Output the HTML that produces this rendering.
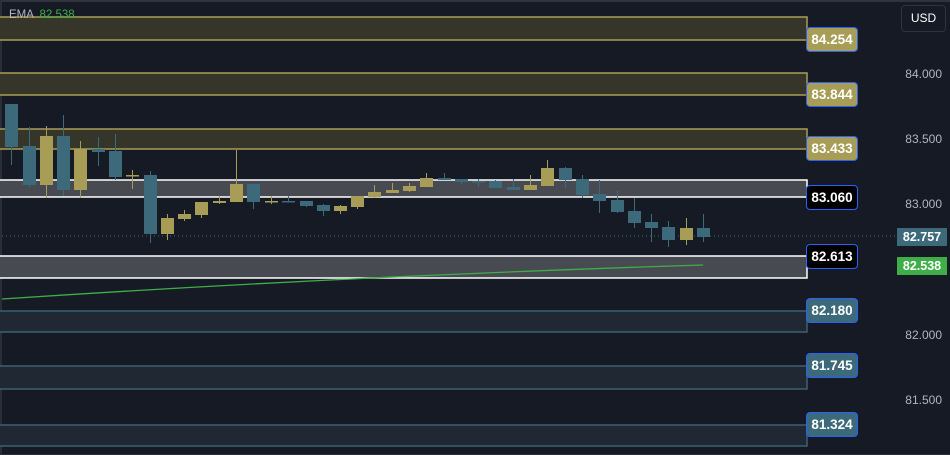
<!DOCTYPE html>
<html><head><style>
html,body{margin:0;padding:0;background:#161a25;}
body{width:950px;height:454px;overflow:hidden;position:relative;font-family:"Liberation Sans",sans-serif;}
.frame{position:absolute;left:0;top:0;width:948px;height:452px;border:1px solid #2a2e39;border-top:2px solid #2f333e;border-left:2px solid #2a2e39;}
.lbl{position:absolute;left:806px;width:50px;height:23px;border:1.5px solid #2962ff;border-radius:4px;color:#fff;font-size:13.5px;font-weight:bold;text-align:center;line-height:23px;}
.ax{position:absolute;right:8px;color:#b2b5be;font-size:12px;}
.tag{position:absolute;left:897px;width:50px;height:18px;color:#fff;font-weight:bold;font-size:12.5px;text-align:center;line-height:18px;}
</style></head><body>
<div class="frame"></div>
<svg width="950" height="454" style="position:absolute;left:0;top:0">
<g stroke-width="1.5">
<rect x="-3" y="17" width="810" height="23" fill="#363529" stroke="#a89d57"/>
<rect x="-3" y="73" width="810" height="22" fill="#363529" stroke="#a89d57"/>
<rect x="-3" y="129" width="810" height="20" fill="#363529" stroke="#a89d57"/>
<rect x="-3" y="180" width="810" height="17" fill="#484a52" stroke="#ffffff"/>
<rect x="-3" y="256" width="810" height="22" fill="#484a52" stroke="#ffffff"/>
<rect x="-3" y="311" width="810" height="21" fill="#1f2833" stroke="#3d6170"/>
<rect x="-3" y="366" width="810" height="23" fill="#1f2833" stroke="#3d6170"/>
<rect x="-3" y="425" width="810" height="21" fill="#1f2833" stroke="#3d6170"/>
</g>
<line x1="2" y1="236" x2="897" y2="236" stroke="#3d6a7a" stroke-width="1" stroke-dasharray="1,3"/>
<path d="M2 299 Q350 276 703 265" fill="none" stroke="#3fae49" stroke-width="1.3"/>
<g id="c"></g>
</svg>
<div style="position:absolute;left:9px;top:9px;font-size:11.5px;color:#b2b5be">EMA <span style="color:#3fae49;margin-left:3px">82.538</span></div>
<div style="position:absolute;left:901px;top:5px;width:43px;height:25px;border:1px solid #2f333e;border-radius:4px;color:#fff;font-size:12px;text-align:center;line-height:25px">USD</div>
<div class="lbl" style="top:27px;background:#a89d57">84.254</div>
<div class="lbl" style="top:82px;background:#a89d57">83.844</div>
<div class="lbl" style="top:136px;background:#a89d57">83.433</div>
<div class="lbl" style="top:185px;background:#000">83.060</div>
<div class="lbl" style="top:244px;background:#000">82.613</div>
<div class="lbl" style="top:298px;background:#3d6a7a">82.180</div>
<div class="lbl" style="top:353px;background:#3d6a7a">81.745</div>
<div class="lbl" style="top:412px;background:#3d6a7a">81.324</div>
<div class="ax" style="top:67px">84.000</div>
<div class="ax" style="top:132px">83.500</div>
<div class="ax" style="top:197px">83.000</div>
<div class="ax" style="top:328px">82.000</div>
<div class="ax" style="top:393px">81.500</div>
<div class="tag" style="top:228px;background:#3d6a7a">82.757</div>
<div class="tag" style="top:257px;background:#3fae49">82.538</div>
<script>
var d=[[5,'b',104,147,104,165],[23,'b',146,185,127,187],[40,'y',136,185,126,198],[57,'b',136,190,115,196],[74,'y',149,190,141,198],[92,'b',149,152,137,166],[109,'b',151,177,134,180],[126,'y',175,176,170,189],[144,'b',175,234,171,243],[161,'y',218,234,214,240],[178,'y',214,219,210,221],[195,'y',202,215,202,218],[213,'y',201,203,196,204],[230,'y',184,202,150,202],[247,'b',184,202,184,209],[265,'y',201,202,196,204],[282,'b',201,202,196,202],[300,'b',201,206,201,207],[317,'b',205,211,204,216],[334,'y',206,211,205,214],[351,'y',196,207,196,209],[368,'y',192,197,185,198],[386,'y',190,193,183,193],[403,'y',186,191,183,192],[420,'y',178,187,173,187],[438,'b',178,180,173,180],[455,'b',179,182,179,184],[472,'b',181,182,179,187],[489,'b',181,188,180,188],[507,'b',187,190,179,190],[524,'y',185,190,175,190],[541,'y',168,186,160,186],[559,'b',168,180,167,188],[576,'b',179,195,175,198],[593,'b',194,201,180,213],[611,'b',200,212,191,213],[628,'b',211,223,198,228],[645,'b',222,228,214,242],[662,'b',227,240,221,247],[680,'y',228,240,218,245],[697,'b',228,237,214,242]];
var s='';d.forEach(function(c){var col=c[1]=='y'?'#a89d57':'#3d6a7a';var x=c[0];
s+='<line x1="'+(x+6.5)+'" y1="'+c[4]+'" x2="'+(x+6.5)+'" y2="'+c[5]+'" stroke="'+col+'" stroke-width="1"/>';
s+='<rect x="'+x+'" y="'+c[2]+'" width="13" height="'+Math.max(1.5,c[3]-c[2])+'" fill="'+col+'"/>';});
document.getElementById('c').innerHTML=s;
</script>
</body></html>
